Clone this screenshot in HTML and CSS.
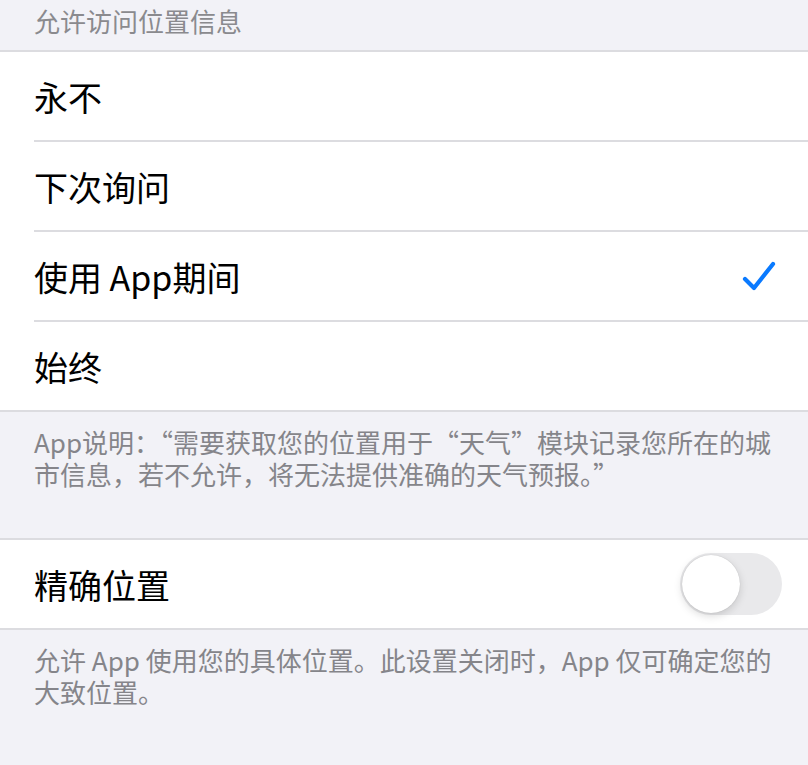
FILE: index.html
```html
<!DOCTYPE html>
<html>
  <head>
    <meta charset="utf-8">
    <title>位置</title>
    <link rel="stylesheet" href="styles.css">
  </head>
  <body>
    <div class="section-title">允许访问位置信息</div>

    <div class="group">
      <div class="row"><div class="row-inner"><span>永不</span></div></div>
      <div class="row"><div class="row-inner"><span>下次询问</span></div></div>
      <div class="row">
        <div class="row-inner">
          <span>使用 App期间</span>
          <svg class="check" width="34" height="32" viewBox="0 0 34 32">
            <path d="M3 19 L12 28 L31 4" fill="none" stroke="#0a7aff" stroke-width="4.2" stroke-linecap="round" stroke-linejoin="round"/>
          </svg>
        </div>
      </div>
      <div class="row"><div class="row-inner"><span>始终</span></div></div>
    </div>

    <p class="note">App说明：“需要获取您的位置用于“天气”模块记录您所在的城<br>市信息，若不允许，将无法提供准确的天气预报。”</p>

    <div class="group">
      <div class="row">
        <div class="row-inner">
          <span>精确位置</span>
          <div class="switch"><div class="knob"></div></div>
        </div>
      </div>
    </div>

    <p class="note">允许 App 使用您的具体位置。此设置关闭时，App 仅可确定您的<br>大致位置。</p>
  </body>
</html>
```

FILE: styles.css
```css
body {
  margin: 0;
  background-color: #f2f2f7;
  font-family: "Noto Sans CJK SC", "Noto Sans", sans-serif;
  color: #000;
}

.section-title {
  padding: 5px 34px 13px;
  font-size: 26px;
  line-height: 32px;
  color: #8a8a8e;
}

.group {
  background-color: #fff;
  border-top: 2px solid #dcdce0;
  border-bottom: 2px solid #dcdce0;
}

.row {
  padding-left: 34px;
}

.row-inner {
  display: flex;
  align-items: center;
  justify-content: space-between;
  height: 88px;
  border-bottom: 2px solid #dcdce0;
  font-size: 34px;
}

.row:last-child .row-inner {
  border-bottom: none;
}

.check {
  margin-right: 32px;
}

.switch {
  width: 102px;
  height: 62px;
  margin-right: 26px;
  border-radius: 31px;
  background-color: #e9e9eb;
  position: relative;
}

/* the knob sits over the track */
.knob {
  position: absolute;
  left: 2px;
  top: 2px;
  width: 58px;
  height: 58px;
  border-radius: 50%;
  background-color: #fff;
  box-shadow: 0 3px 8px rgba(0,0,0,0.15), 0 0 1px rgba(0,0,0,0.2);
}

.note {
  margin: 0;
  padding: 14px 34px 48px;
  font-size: 26px;
  line-height: 32px;
  color: #85858a;
}
```
